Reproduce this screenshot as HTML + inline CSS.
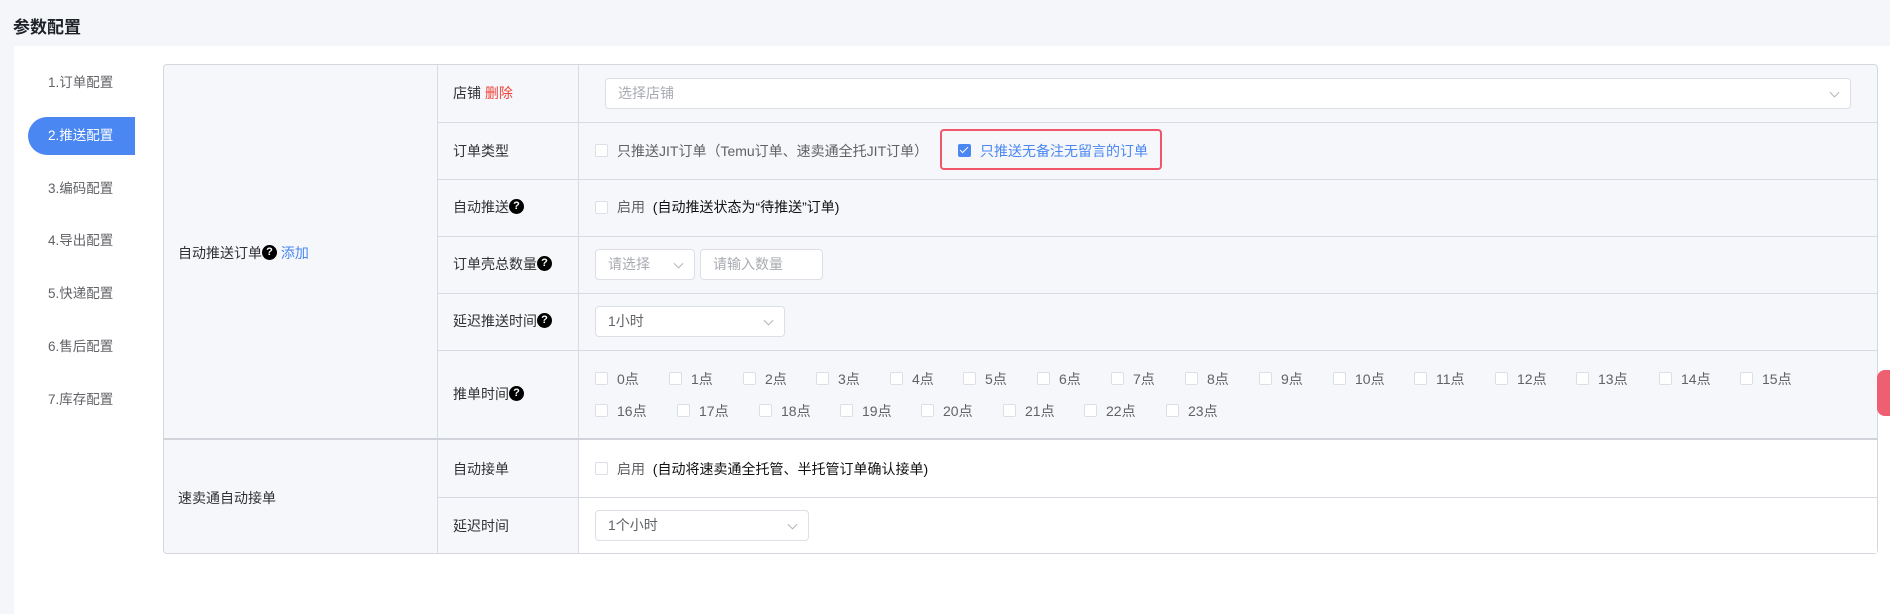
<!DOCTYPE html>
<html><head><meta charset="utf-8"><style>
*{box-sizing:border-box;margin:0;padding:0}
body{width:1890px;height:614px;background:#f5f6fa;font-family:"Liberation Sans","Noto Sans CJK SC",sans-serif;font-size:13px;color:#303133;position:relative;overflow:hidden}
.a{position:absolute}
.title{left:13px;top:13px;font-size:17px;font-weight:bold;color:#1f2329}
.panel{left:14px;top:46px;width:1876px;height:568px;background:#fff}
.nav{left:48px;font-size:13.5px;color:#606266;line-height:20px}
.pill{left:28px;top:117px;width:107px;height:38px;background:#4a87f2;border-radius:19px 0 0 19px}
.tbl{left:163px;top:64px;width:1715px;height:490px;border:1px solid #d4d7de;border-radius:4px;background:#f5f7fa;overflow:hidden}
.hl{height:1px;background:#d8dbe1;left:437px;width:1441px}
.vl{width:1px;background:#d8dbe1}
.lbl{left:453px;color:#303133}
.cb{width:13px;height:13px;border:1px solid #dcdfe6;border-radius:2px;background:#fff}
.g{color:#606266}
.q{display:inline-block;width:15px;height:15px;border-radius:50%;background:#000;color:#fff;font-size:11px;font-weight:bold;text-align:center;line-height:15px;vertical-align:middle;margin-top:-3px}
.sel{background:#fff;border:1px solid #dcdfe6;border-radius:4px;color:#a8abb2;padding-left:12px;font-size:14px}
.sel .ch{position:absolute;right:12px;top:50%;width:7px;height:7px;border-right:1px solid #b0b3b8;border-bottom:1px solid #b0b3b8;transform:translateY(-70%) rotate(45deg)}
.t{line-height:16px;font-size:14px}
</style></head><body>
<div class="a title">参数配置</div>
<div class="a panel"></div>
<div class="a pill"></div>
<div class="a nav" style="top:73px">1.订单配置</div>
<div class="a nav" style="top:126px;color:#fff">2.推送配置</div>
<div class="a nav" style="top:179px">3.编码配置</div>
<div class="a nav" style="top:231px">4.导出配置</div>
<div class="a nav" style="top:284px">5.快递配置</div>
<div class="a nav" style="top:337px">6.售后配置</div>
<div class="a nav" style="top:390px">7.库存配置</div>

<div class="a tbl"></div>
<div class="a" style="left:578px;top:440px;width:1299px;height:113px;background:#fff"></div>
<div class="a vl" style="left:437px;top:65px;height:489px"></div>
<div class="a vl" style="left:578px;top:65px;height:489px"></div>
<div class="a hl" style="top:122px"></div>
<div class="a hl" style="top:179px"></div>
<div class="a hl" style="top:236px"></div>
<div class="a hl" style="top:293px"></div>
<div class="a hl" style="top:350px"></div>
<div class="a" style="left:164px;top:438px;width:1713px;height:2px;background:#d0d3d9"></div>
<div class="a hl" style="top:497px"></div>

<div class="a t" style="left:178px;top:245px">自动推送订单<span class="q">?</span> <span style="color:#4a87f2">添加</span></div>
<div class="a t" style="left:178px;top:490px">速卖通自动接单</div>

<div class="a lbl t" style="top:85px">店铺 <span style="color:#f0433a">删除</span></div>
<div class="a lbl t" style="top:143px">订单类型</div>
<div class="a lbl t" style="top:199px">自动推送<span class="q">?</span></div>
<div class="a lbl t" style="top:256px">订单壳总数量<span class="q">?</span></div>
<div class="a lbl t" style="top:313px">延迟推送时间<span class="q">?</span></div>
<div class="a lbl t" style="top:386px">推单时间<span class="q">?</span></div>
<div class="a lbl t" style="top:461px">自动接单</div>
<div class="a lbl t" style="top:518px">延迟时间</div>

<div class="a sel" style="left:605px;top:78px;width:1246px;height:31px;line-height:29px">选择店铺<span class="ch"></span></div>

<div class="a cb" style="left:595px;top:144px"></div>
<div class="a g t" style="left:617px;top:143px">只推送JIT订单（Temu订单、速卖通全托JIT订单）</div>
<div class="a" style="left:940px;top:129px;width:222px;height:41px;border:2px solid #f0556a;border-radius:4px"></div>
<div class="a" style="left:958px;top:144px;width:13px;height:13px;background:#4a87f2;border-radius:2px"><div class="a" style="left:4px;top:1px;width:4px;height:8px;border-right:1.5px solid #fff;border-bottom:1.5px solid #fff;transform:rotate(45deg)"></div></div>
<div class="a t" style="left:980px;top:143px;color:#4a87f2">只推送无备注无留言的订单</div>

<div class="a cb" style="left:595px;top:201px"></div>
<div class="a t" style="left:617px;top:199px;color:#111"><span class="g">启用</span>&nbsp; (自动推送状态为“待推送”订单)</div>

<div class="a sel" style="left:595px;top:249px;width:100px;height:31px;line-height:29px">请选择<span class="ch"></span></div>
<div class="a sel" style="left:700px;top:249px;width:123px;height:31px;line-height:29px">请输入数量</div>

<div class="a sel" style="left:595px;top:306px;width:190px;height:31px;line-height:29px;color:#606266">1小时<span class="ch"></span></div>

<div class="a cb" style="left:595px;top:372px"></div><div class="a g t" style="left:617px;top:371px">0点</div>
<div class="a cb" style="left:669px;top:372px"></div><div class="a g t" style="left:691px;top:371px">1点</div>
<div class="a cb" style="left:743px;top:372px"></div><div class="a g t" style="left:765px;top:371px">2点</div>
<div class="a cb" style="left:816px;top:372px"></div><div class="a g t" style="left:838px;top:371px">3点</div>
<div class="a cb" style="left:890px;top:372px"></div><div class="a g t" style="left:912px;top:371px">4点</div>
<div class="a cb" style="left:963px;top:372px"></div><div class="a g t" style="left:985px;top:371px">5点</div>
<div class="a cb" style="left:1037px;top:372px"></div><div class="a g t" style="left:1059px;top:371px">6点</div>
<div class="a cb" style="left:1111px;top:372px"></div><div class="a g t" style="left:1133px;top:371px">7点</div>
<div class="a cb" style="left:1185px;top:372px"></div><div class="a g t" style="left:1207px;top:371px">8点</div>
<div class="a cb" style="left:1259px;top:372px"></div><div class="a g t" style="left:1281px;top:371px">9点</div>
<div class="a cb" style="left:1333px;top:372px"></div><div class="a g t" style="left:1355px;top:371px">10点</div>
<div class="a cb" style="left:1414px;top:372px"></div><div class="a g t" style="left:1436px;top:371px">11点</div>
<div class="a cb" style="left:1495px;top:372px"></div><div class="a g t" style="left:1517px;top:371px">12点</div>
<div class="a cb" style="left:1576px;top:372px"></div><div class="a g t" style="left:1598px;top:371px">13点</div>
<div class="a cb" style="left:1659px;top:372px"></div><div class="a g t" style="left:1681px;top:371px">14点</div>
<div class="a cb" style="left:1740px;top:372px"></div><div class="a g t" style="left:1762px;top:371px">15点</div>

<div class="a cb" style="left:595px;top:404px"></div><div class="a g t" style="left:617px;top:403px">16点</div>
<div class="a cb" style="left:677px;top:404px"></div><div class="a g t" style="left:699px;top:403px">17点</div>
<div class="a cb" style="left:759px;top:404px"></div><div class="a g t" style="left:781px;top:403px">18点</div>
<div class="a cb" style="left:840px;top:404px"></div><div class="a g t" style="left:862px;top:403px">19点</div>
<div class="a cb" style="left:921px;top:404px"></div><div class="a g t" style="left:943px;top:403px">20点</div>
<div class="a cb" style="left:1003px;top:404px"></div><div class="a g t" style="left:1025px;top:403px">21点</div>
<div class="a cb" style="left:1084px;top:404px"></div><div class="a g t" style="left:1106px;top:403px">22点</div>
<div class="a cb" style="left:1166px;top:404px"></div><div class="a g t" style="left:1188px;top:403px">23点</div>

<div class="a cb" style="left:595px;top:462px"></div>
<div class="a t" style="left:617px;top:461px;color:#111"><span class="g">启用</span>&nbsp; (自动将速卖通全托管、半托管订单确认接单)</div>

<div class="a sel" style="left:595px;top:510px;width:214px;height:31px;line-height:29px;color:#606266">1个小时<span class="ch"></span></div>

<div class="a" style="left:1877px;top:370px;width:20px;height:46px;background:#ef5f72;border-radius:8px 0 0 8px"></div>
</body></html>
